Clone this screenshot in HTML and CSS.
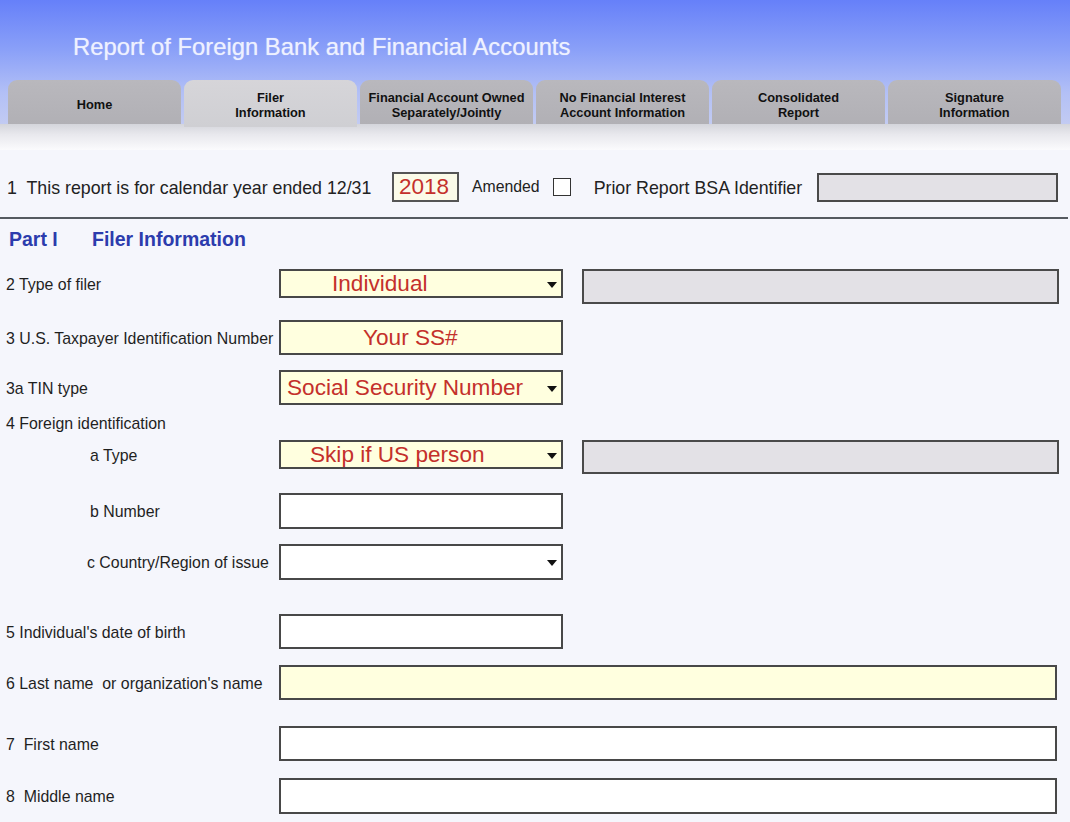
FILE: index.html
```html
<!DOCTYPE html>
<html>
<head>
<meta charset="utf-8">
<title>FBAR - Filer Information</title>
<link rel="stylesheet" href="styles.css">
</head>
<body>
<header class="hdr">
  <h1 class="title">Report of Foreign Bank and Financial Accounts</h1>
  <nav class="tabs">
    <div class="tab"><span>Home</span></div>
    <div class="tab active"><span>Filer<br>Information</span></div>
    <div class="tab"><span>Financial Account Owned<br>Separately/Jointly</span></div>
    <div class="tab"><span>No Financial Interest<br>Account Information</span></div>
    <div class="tab"><span>Consolidated<br>Report</span></div>
    <div class="tab"><span>Signature<br>Information</span></div>
  </nav>
</header>
<div class="band"></div>
<main class="form">
  <div class="r1">
    <span class="r1-lbl">1&nbsp; This report is for calendar year ended 12/31</span>
    <div class="year">2018</div>
    <span class="amended">Amended</span>
    <span class="chk"></span>
    <span class="prior">Prior Report BSA Identifier</span>
    <div class="gray prior-box"></div>
  </div>
  <div class="rule"></div>
  <h2 class="part"><span class="part-no">Part I</span><span>Filer Information</span></h2>

  <div class="rows">
    <div class="row">
      <div class="field">
        <span class="lbl">2 Type of filer</span>
        <div class="box yel h29"><span class="val v-ind">Individual</span><svg class="arr" viewBox="0 0 10 6"><path d="M0 0h10L5 6z"/></svg></div>
      </div>
      <div class="gray side h35"></div>
    </div>

    <div class="row mt16">
      <div class="field">
        <span class="lbl">3 U.S. Taxpayer Identification Number</span>
        <div class="box yel h35"><span class="val v-ss">Your SS#</span></div>
      </div>
    </div>

    <div class="row mt15">
      <div class="field">
        <span class="lbl">3a TIN type</span>
        <div class="box yel h35"><span class="val v-soc">Social Security Number</span><svg class="arr" viewBox="0 0 10 6"><path d="M0 0h10L5 6z"/></svg></div>
      </div>
    </div>

    <div class="row">
      <div class="field h35">
        <span class="lbl">4 Foreign identification</span>
      </div>
    </div>

    <div class="row">
      <div class="field">
        <span class="lbl ind">a Type</span>
        <div class="box yel h29"><span class="val v-skip">Skip if US person</span><svg class="arr" viewBox="0 0 10 6"><path d="M0 0h10L5 6z"/></svg></div>
      </div>
      <div class="gray side h34"></div>
    </div>

    <div class="row mt19">
      <div class="field">
        <span class="lbl ind">b Number</span>
        <div class="box wht h36"></div>
      </div>
    </div>

    <div class="row mt15">
      <div class="field">
        <span class="lbl ind2">c Country/Region of issue</span>
        <div class="box wht h36"><svg class="arr" viewBox="0 0 10 6"><path d="M0 0h10L5 6z"/></svg></div>
      </div>
    </div>

    <div class="row mt34">
      <div class="field">
        <span class="lbl">5 Individual's date of birth</span>
        <div class="box wht h35"></div>
      </div>
    </div>

    <div class="row mt16">
      <div class="field">
        <span class="lbl">6 Last name&nbsp; or organization's name</span>
        <div class="box yel h35 full"></div>
      </div>
    </div>

    <div class="row mt26">
      <div class="field">
        <span class="lbl">7&nbsp; First name</span>
        <div class="box wht h35 full"></div>
      </div>
    </div>

    <div class="row mt17">
      <div class="field">
        <span class="lbl">8&nbsp; Middle name</span>
        <div class="box wht h36 full"></div>
      </div>
    </div>
  </div>
</main>
</body>
</html>
```
FILE: styles.css
```css
* { box-sizing: border-box; }
html, body { margin: 0; padding: 0; }
body {
  background: #f5f6fc;
  font-family: "Liberation Sans", Arial, sans-serif;
  color: #1f1f1f;
  width: 1070px;
  overflow: hidden;
}

/* header */
.hdr {
  height: 124px;
  display: flex;
  flex-direction: column;
  background: linear-gradient(180deg, #6680f9 0%, #8aa0f8 40%, #b3c0f6 75%, #c2cbf2 100%);
}
.title {
  margin: 0;
  padding: 35px 0 0 73px;
  font-size: 23.8px;
  line-height: 24px;
  font-weight: normal;
  color: #eef1ff;
  text-shadow: 0 0 1px rgba(255,255,255,0.6);
}
.tabs {
  margin-top: auto;
  display: flex;
  gap: 3px;
  padding-left: 8px;
  height: 44px;
}
.tab {
  flex: 0 0 173px;
  height: 44px;
  border-radius: 9px 9px 0 0;
  background: linear-gradient(180deg, #b9b8bd 0%, #b1b0b5 100%);
  display: flex;
  align-items: center;
  justify-content: center;
  text-align: center;
  padding-top: 5px;
  font-weight: bold;
  font-size: 12.8px;
  line-height: 15px;
  color: #111;
}
.tab.active {
  background: linear-gradient(180deg, #d6d5d9 0%, #cfcfd3 100%);
  height: 47px;
  padding-top: 2px;
  position: relative;
  z-index: 1;
}

.band {
  height: 26px;
  background: linear-gradient(180deg, #d4d5db 0%, #e8e8ed 40%, #fbfbfd 100%);
}

/* row 1 */
.form { padding: 0; }
.r1 {
  margin-top: 22px;
  height: 30px;
  display: flex;
  align-items: center;
  padding-left: 7px;
}
.r1-lbl {
  width: 385px;
  font-size: 17.8px;
  color: #222;
  white-space: nowrap;
  padding-top: 2px;
}
.year {
  width: 67px;
  height: 30px;
  border: 2px solid #555;
  background: #fbfbe8;
  color: #c4302b;
  font-size: 22.5px;
  line-height: 26px;
  padding-left: 5px;
}
.amended {
  margin-left: 13px;
  font-size: 15.8px;
  color: #222;
}
.chk {
  margin-left: 13px;
  width: 18px;
  height: 18px;
  border: 1.5px solid #333;
  background: #fff;
}
.prior {
  margin-left: 23px;
  width: 223px;
  font-size: 17.8px;
  color: #222;
  white-space: nowrap;
  padding-top: 2px;
}
.prior-box {
  width: 241px;
  height: 29px;
}

.rule {
  margin: 15px 2px 0 0;
  border-top: 2px solid #555a60;
}

.part {
  margin: 9px 0 0;
  padding-left: 9px;
  height: 22px;
  line-height: 22px;
  font-size: 19.5px;
  font-weight: bold;
  color: #2c3cad;
  display: flex;
}
.part-no { width: 83px; }

/* rows */
.rows {
  margin-top: 19px;
  display: flex;
  flex-direction: column;
  padding-left: 6px;
}
.row {
  display: flex;
  align-items: flex-start;
}
.field {
  display: flex;
  align-items: center;
}
.lbl {
  width: 273px;
  font-size: 15.9px;
  color: #1f1f1f;
  white-space: nowrap;
  padding-top: 2px;
}
.lbl.ind { padding-left: 84px; }
.lbl.ind2 { padding-left: 81px; }

.box {
  width: 284px;
  border: 2px solid #484848;
  display: flex;
  align-items: center;
  position: relative;
}
.box.full { width: 778px; }
.yel { background: #ffffdf; }
.wht { background: #fff; }
.h29 { height: 29px; }
.h34 { height: 34px; }
.h35 { height: 35px; }
.h36 { height: 36px; }

.val {
  color: #c4302b;
  font-size: 22.6px;
  line-height: 1;
  white-space: nowrap;
  padding-top: 1px;
}
.v-ind { padding-left: 51px; }
.v-ss { padding-left: 82px; }
.v-soc { padding-left: 6px; }
.v-skip { padding-left: 29px; }

.arr {
  position: absolute;
  right: 4px;
  top: 50%;
  width: 10px;
  height: 6px;
  margin-top: -2px;
  fill: #111;
}

.gray {
  background: #e3e1e6;
  border: 2px solid #4a4a4a;
}
.side {
  margin-left: 19px;
  width: 477px;
}

.mt15 { margin-top: 15px; }
.mt16 { margin-top: 16px; }
.mt17 { margin-top: 17px; }
.mt19 { margin-top: 19px; }
.mt26 { margin-top: 26px; }
.mt34 { margin-top: 34px; }
```
